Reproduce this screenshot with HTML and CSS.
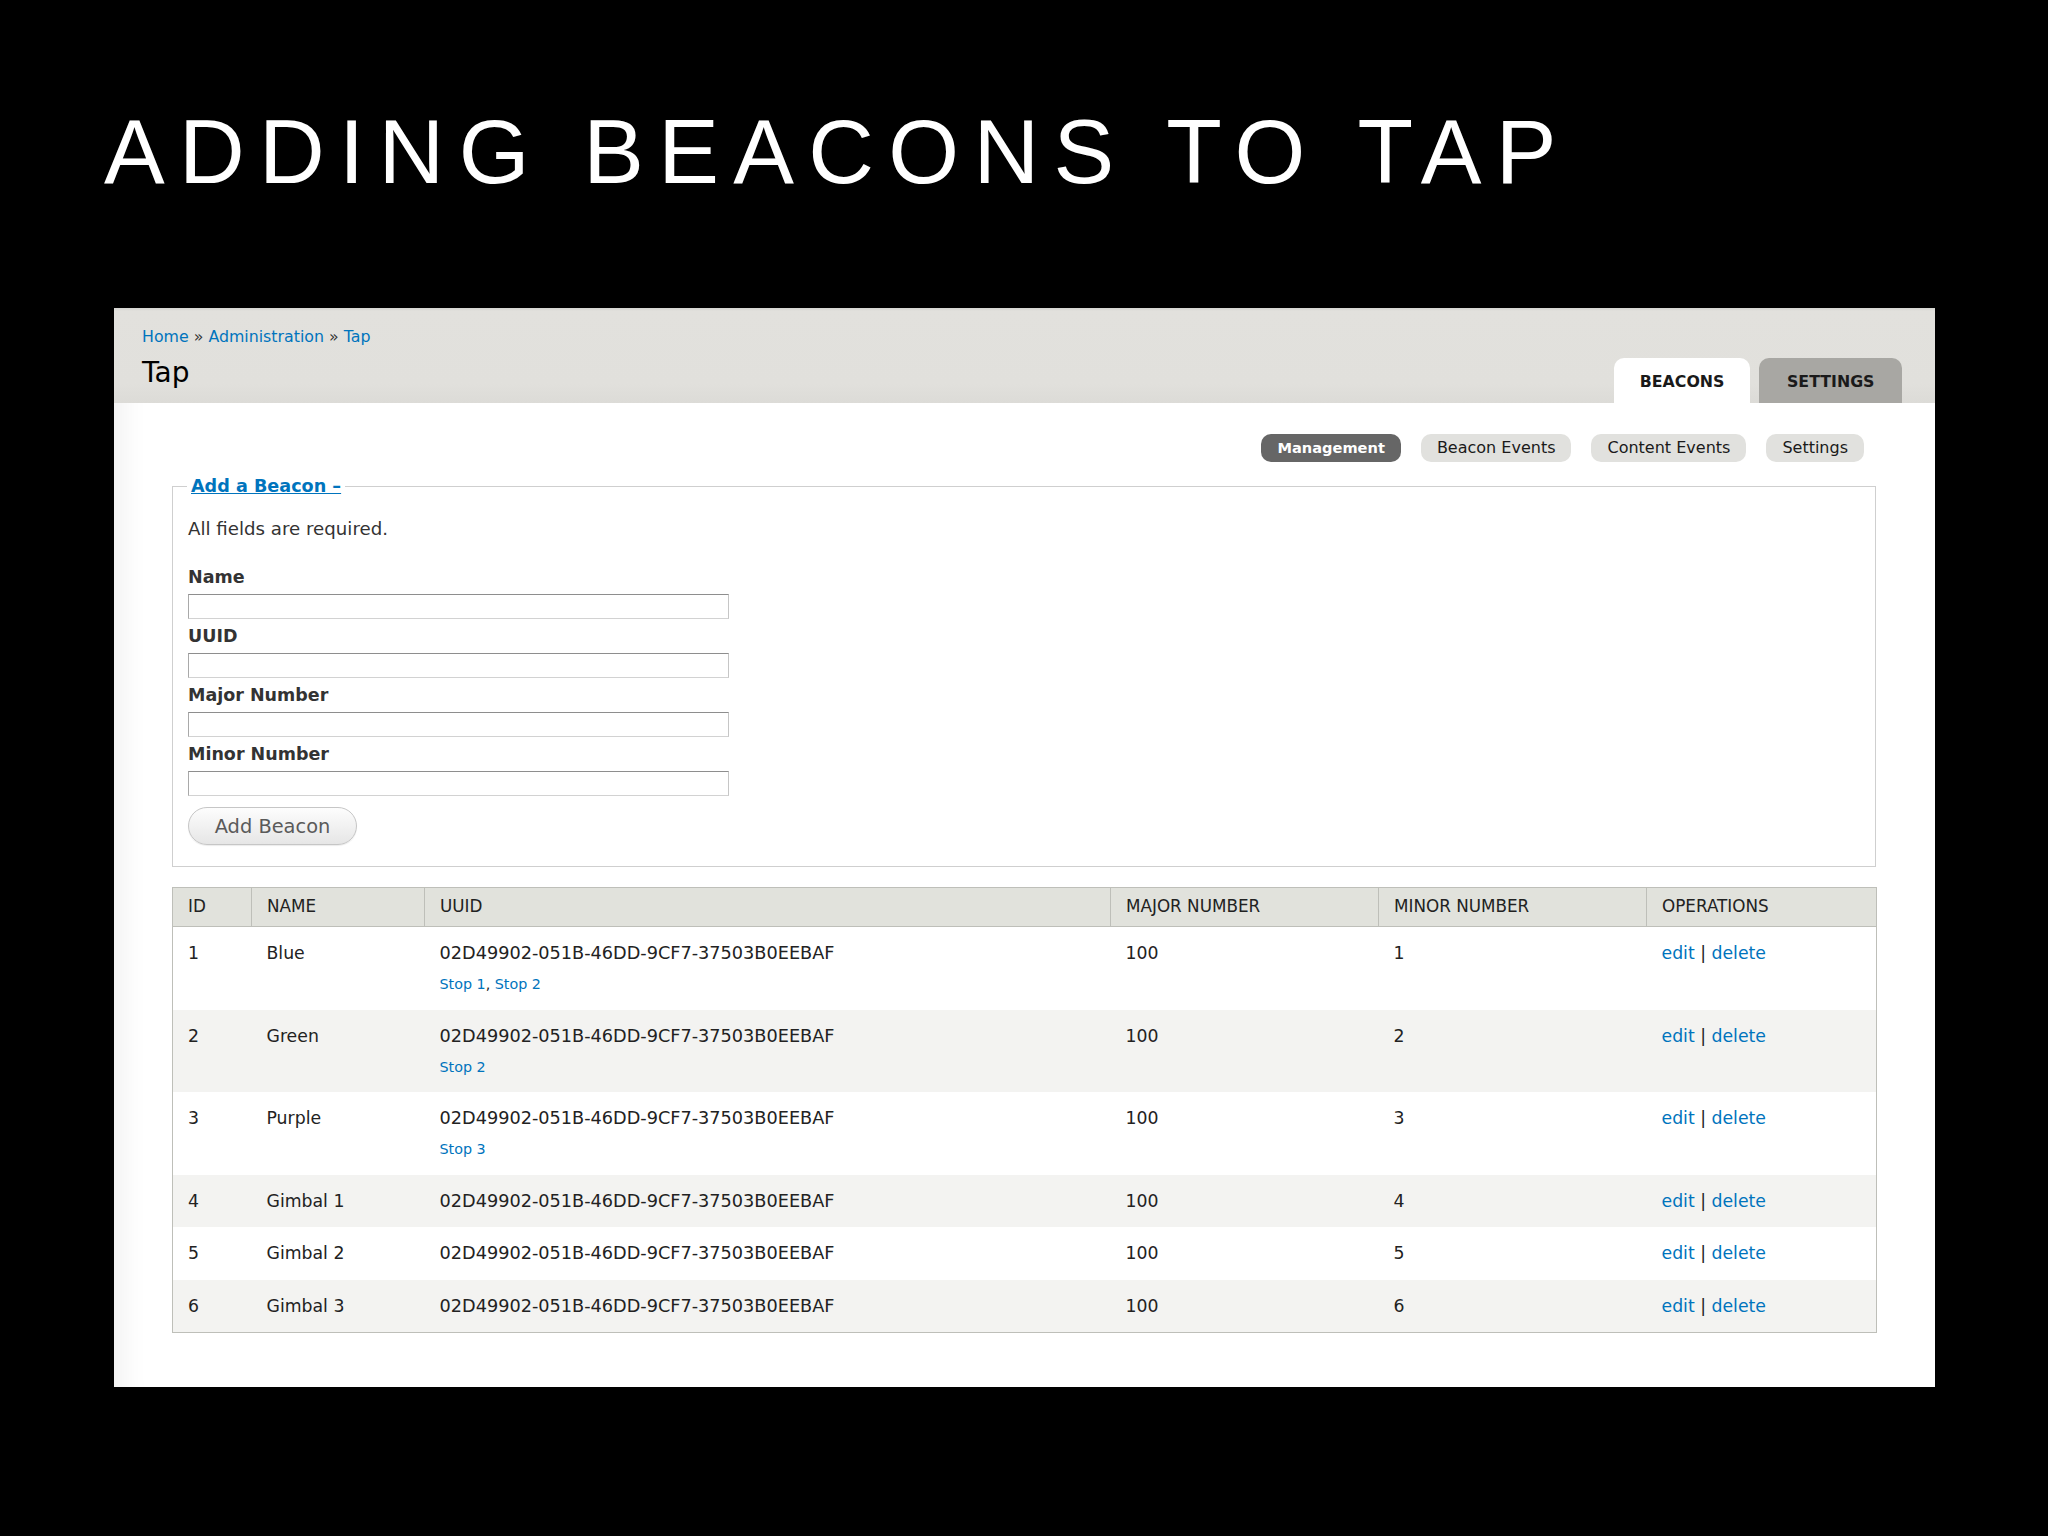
FILE: index.html
```html
<!DOCTYPE html>
<html>
<head>
<meta charset="utf-8">
<title>Adding Beacons to Tap</title>
<link rel="stylesheet" href="styles.css">
</head>
<body>
<div class="slide">
  <h1 class="slide-title">ADDING BEACONS TO TAP</h1>
  <div class="panel">
    <div class="header">
      <div class="header-left">
        <div class="breadcrumb"><a href="#">Home</a> » <a href="#">Administration</a> » <a href="#">Tap</a></div>
        <div class="page-title">Tap</div>
      </div>
      <ul class="tabs">
        <li class="tab active">BEACONS</li>
        <li class="tab">SETTINGS</li>
      </ul>
    </div>
    <div class="content">
      <ul class="pills">
        <li class="pill active">Management</li>
        <li class="pill">Beacon Events</li>
        <li class="pill">Content Events</li>
        <li class="pill">Settings</li>
      </ul>
      <fieldset class="box">
        <legend><a href="#">Add a Beacon –</a></legend>
        <div class="desc">All fields are required.</div>
        <div class="fields">
          <div class="item"><label>Name</label><input type="text"></div>
          <div class="item"><label>UUID</label><input type="text"></div>
          <div class="item"><label>Major Number</label><input type="text"></div>
          <div class="item"><label>Minor Number</label><input type="text"></div>
        </div>
        <button class="btn">Add Beacon</button>
      </fieldset>
      <table class="grid">
        <colgroup>
          <col class="c-id"><col class="c-name"><col class="c-uuid"><col class="c-major"><col class="c-minor"><col class="c-ops">
        </colgroup>
        <thead>
          <tr><th>ID</th><th>NAME</th><th>UUID</th><th>MAJOR NUMBER</th><th>MINOR NUMBER</th><th>OPERATIONS</th></tr>
        </thead>
        <tbody>
          <tr class="odd"><td>1</td><td>Blue</td><td><span class="uuid">02D49902-051B-46DD-9CF7-37503B0EEBAF</span><div class="stops"><a href="#">Stop 1</a>, <a href="#">Stop 2</a></div></td><td>100</td><td>1</td><td><a href="#">edit</a> | <a href="#">delete</a></td></tr>
          <tr class="even"><td>2</td><td>Green</td><td><span class="uuid">02D49902-051B-46DD-9CF7-37503B0EEBAF</span><div class="stops"><a href="#">Stop 2</a></div></td><td>100</td><td>2</td><td><a href="#">edit</a> | <a href="#">delete</a></td></tr>
          <tr class="odd"><td>3</td><td>Purple</td><td><span class="uuid">02D49902-051B-46DD-9CF7-37503B0EEBAF</span><div class="stops"><a href="#">Stop 3</a></div></td><td>100</td><td>3</td><td><a href="#">edit</a> | <a href="#">delete</a></td></tr>
          <tr class="even"><td>4</td><td>Gimbal 1</td><td><span class="uuid">02D49902-051B-46DD-9CF7-37503B0EEBAF</span></td><td>100</td><td>4</td><td><a href="#">edit</a> | <a href="#">delete</a></td></tr>
          <tr class="odd"><td>5</td><td>Gimbal 2</td><td><span class="uuid">02D49902-051B-46DD-9CF7-37503B0EEBAF</span></td><td>100</td><td>5</td><td><a href="#">edit</a> | <a href="#">delete</a></td></tr>
          <tr class="even"><td>6</td><td>Gimbal 3</td><td><span class="uuid">02D49902-051B-46DD-9CF7-37503B0EEBAF</span></td><td>100</td><td>6</td><td><a href="#">edit</a> | <a href="#">delete</a></td></tr>
        </tbody>
      </table>
    </div>
  </div>
</div>
</body>
</html>
```
FILE: styles.css
```css
html, body {
  margin: 0;
  padding: 0;
  background: #000;
}
.slide {
  width: 2048px;
  height: 1536px;
  padding-top: 106px;
  box-sizing: border-box;
  background: #000;
}
.slide-title {
  margin: 0 0 0 104px;
  font-family: "Liberation Sans", Arial, sans-serif;
  font-weight: normal;
  font-size: 91px;
  line-height: 91px;
  letter-spacing: 14.3px;
  color: #fff;
  white-space: nowrap;
}
.panel {
  margin: 111px 0 0 114px;
  width: 1821px;
  height: 1079px;
  background: #fff;
  font-family: "DejaVu Sans", Verdana, sans-serif;
  color: #222;
  box-shadow: inset 36px 0 30px -30px rgba(0,0,0,0.07);
}
a {
  color: #0074bd;
  text-decoration: none;
}
.header {
  height: 95px;
  box-sizing: border-box;
  background: linear-gradient(#d4d4d0 0, #e2e1dd 3px, #e1e0dc 80%, #dcdbd7 100%);
  display: flex;
  justify-content: space-between;
  align-items: flex-end;
  padding: 0 33px 0 28px;
}
.header-left {
  align-self: flex-start;
  padding-top: 19px;
}
.breadcrumb {
  font-size: 15.8px;
  line-height: 20px;
  color: #333;
}
.page-title {
  margin-top: 9px;
  font-size: 28px;
  line-height: 34px;
  color: #000;
}
.tabs {
  list-style: none;
  margin: 0;
  padding: 0;
  display: flex;
  gap: 9px;
}
.tab {
  height: 45px;
  line-height: 47px;
  padding: 0 26px;
  border-radius: 10px 10px 0 0;
  background: #a8a7a3;
  font-weight: bold;
  font-size: 15.8px;
  color: #1a1a1a;
}
.tab + .tab {
  padding: 0 27.5px;
}
.tab.active {
  background: #fff;
}
.content {
  padding: 31px 59px 0 58px;
}
.pills {
  list-style: none;
  margin: 0;
  padding: 0 12px 0 0;
  display: flex;
  justify-content: flex-end;
  gap: 20px;
}
.pill {
  height: 28px;
  line-height: 28px;
  padding: 0 16px;
  border-radius: 10px;
  background: #e1e1de;
  font-size: 16px;
  color: #1a1a1a;
}
.pill.active {
  background: #666;
  color: #fff;
  font-weight: bold;
  font-size: 14.6px;
  padding: 0 16px;
}
.box {
  margin: 13px 0 0 0;
  padding: 21px 15px 21px 15px;
  border: 1px solid #cfcfcf;
  min-width: 0;
}
.box legend {
  padding: 0 4px;
  margin-left: -1px;
  font-weight: bold;
  font-size: 17.6px;
  line-height: 22px;
}
.box legend a {
  text-decoration: underline;
}
.desc {
  font-size: 18.2px;
  line-height: 22px;
  color: #333;
}
.fields {
  margin-top: 26px;
}
.item {
  margin-bottom: 6px;
}
.item label {
  display: block;
  font-weight: bold;
  font-size: 17.5px;
  line-height: 22px;
  margin-bottom: 6px;
  color: #333;
}
.item input {
  display: block;
  box-sizing: border-box;
  width: 541px;
  height: 25px;
  margin: 0;
  padding: 0;
  background: #fff;
  border: 1px solid;
  border-color: #8e8e8e #c6c6c6 #d2d2d2 #a9a9a9;
}
.btn {
  display: block;
  margin-top: 11px;
  box-sizing: border-box;
  width: 169px;
  height: 38px;
  padding: 0;
  border: 1px solid #c6c6c6;
  border-radius: 19px;
  background: linear-gradient(#fdfdfd, #e6e6e6);
  font-family: "DejaVu Sans", Verdana, sans-serif;
  font-size: 19.4px;
  color: #5a5a5a;
  box-shadow: 0 1px 1px rgba(0,0,0,0.08);
}
.grid {
  margin-top: 20px;
  width: 1704px;
  border-collapse: collapse;
  table-layout: fixed;
  border: 1px solid #bebfb9;
  font-size: 17.3px;
}
.c-id { width: 79px; }
.c-name { width: 173px; }
.c-uuid { width: 686px; }
.c-major { width: 268px; }
.c-minor { width: 268px; }
.c-ops { width: 230px; }
.grid th {
  background: #e1e2dc;
  border: 1px solid #bebfb9;
  text-align: left;
  font-weight: normal;
  font-size: 16.8px;
  line-height: 21px;
  padding: 8px 15px 9px 15px;
  color: #222;
}
.grid td {
  vertical-align: top;
  padding: 16px 15px 15.5px 15px;
  line-height: 21px;
  color: #222;
}
.grid tr.odd td {
  background: #fff;
}
.grid tr.even td {
  background: #f3f3f1;
}
.uuid {
  font-size: 17.7px;
}
.stops {
  margin-top: 10px;
  line-height: 20px;
  font-size: 14.3px;
}
```
